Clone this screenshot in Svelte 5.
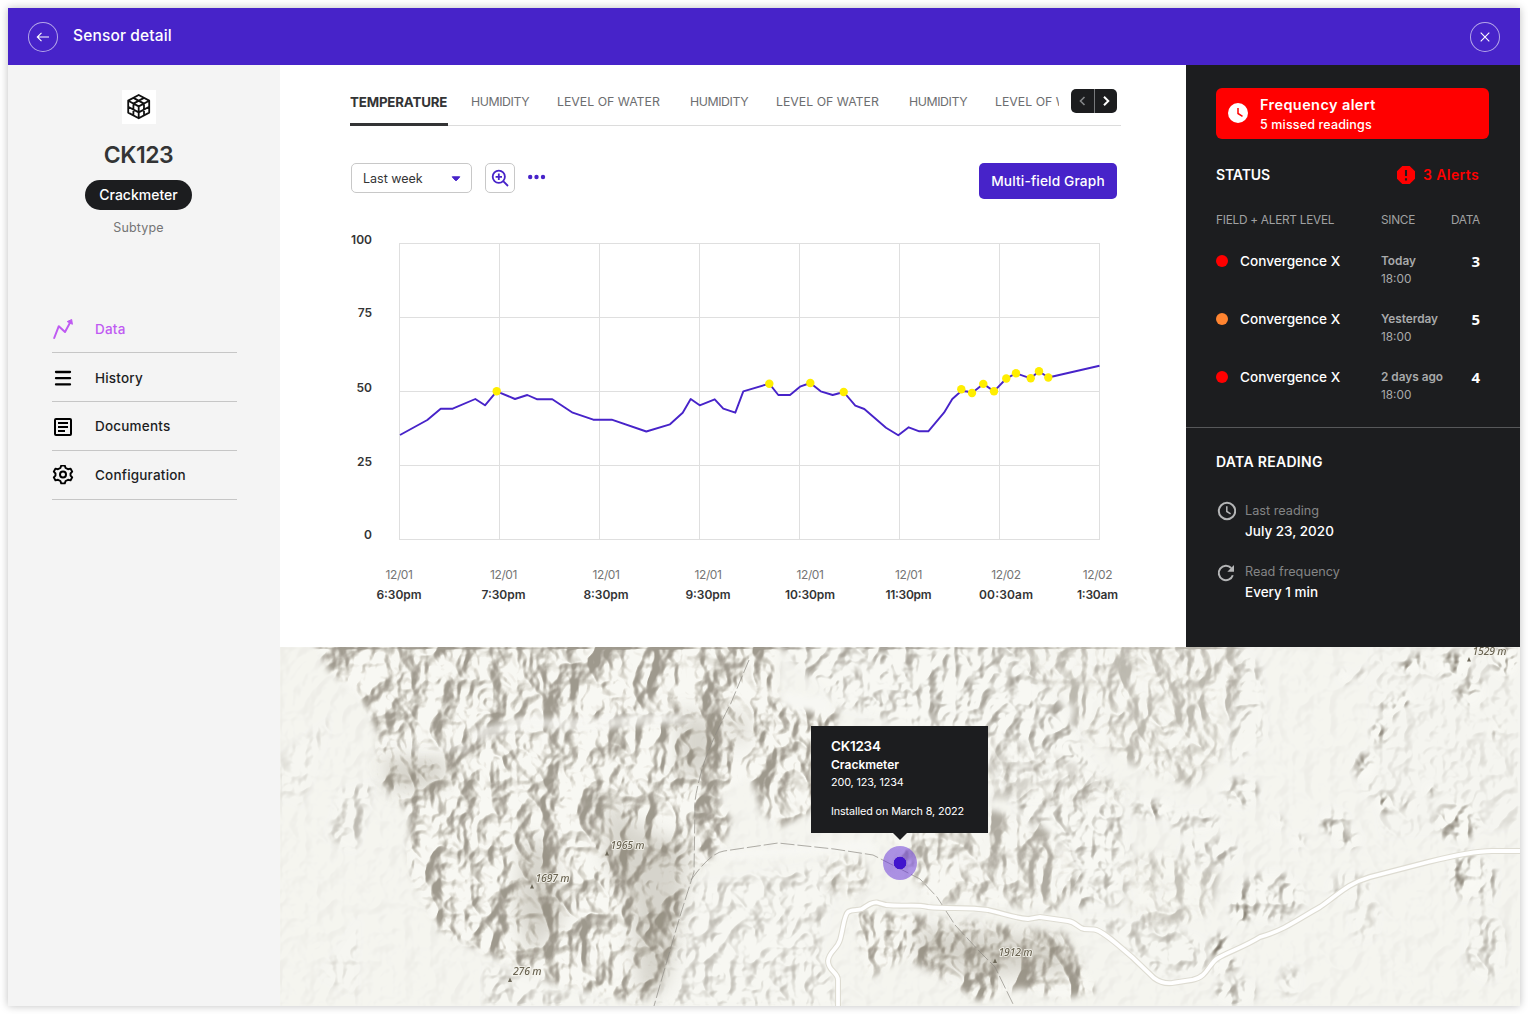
<script>
  const nav = ['Data', 'History', 'Documents', 'Configuration'];
  const tabs = ['TEMPERATURE', 'HUMIDITY', 'LEVEL OF WATER', 'HUMIDITY', 'LEVEL OF WATER', 'HUMIDITY', 'LEVEL OF WATER'];

  const gridX = [399.5, 499.5, 599.5, 699.5, 799.5, 899.5, 999.5, 1099.5];
  const gridY = [243.5, 317.5, 391.5, 465.5, 539.5];
  const yLabels = [
    { v: '100', y: 244 },
    { v: '75', y: 317 },
    { v: '50', y: 392 },
    { v: '25', y: 466 },
    { v: '0', y: 539 }
  ];
  const xLabels = [
    { x: 399, d: '12/01', t: '6:30pm', w: 45 },
    { x: 503.5, d: '12/01', t: '7:30pm', w: 44 },
    { x: 606, d: '12/01', t: '8:30pm', w: 45 },
    { x: 708, d: '12/01', t: '9:30pm', w: 45 },
    { x: 810, d: '12/01', t: '10:30pm', w: 50 },
    { x: 908.5, d: '12/01', t: '11:30pm', w: 46 },
    { x: 1006, d: '12/02', t: '00:30am', w: 54 },
    { x: 1097.5, d: '12/02', t: '1:30am', w: 41 }
  ];
  const series = [
    [400, 435], [427.3, 420], [440.7, 408.7], [452.7, 408.7], [475.3, 399], [485, 405.3], [496.7, 391.3],
    [515, 399], [527.3, 395], [537.3, 399.3], [552.3, 399.3], [572.7, 412.7], [593.3, 419.7], [611.7, 419.7],
    [646.3, 431.5], [670, 424.3], [682.7, 412.7], [690.7, 399], [699.7, 405.3], [714.7, 399.3], [723.3, 408.7],
    [735.3, 412.7], [743.3, 391.3], [769.3, 383.7], [778.3, 395], [790, 395], [800, 386.7], [810.3, 383],
    [820.7, 391.3], [832.7, 395], [843.7, 392], [855.3, 405.7], [864.3, 409], [886, 427.7], [898.3, 435.3],
    [908.7, 427.3], [919.3, 431.3], [928.3, 431.3], [944, 412.7], [952.3, 399], [961.3, 391], [967, 391.5], [972, 393],
    [983.3, 383.9], [994, 391.3], [1006.3, 378.5], [1016, 373.3], [1030.7, 378.3], [1039, 371.3], [1048.3, 377.5],
    [1099.5, 365.8]
  ];
  const warnings = [
    [496.7, 391.3], [769.3, 383.7], [810.3, 383], [843.7, 392], [961.3, 389.3], [972, 393], [983.3, 383.9],
    [994, 391.3], [1006.3, 378.5], [1016, 373.3], [1030.7, 378.3], [1039, 371.3], [1048.3, 377.5]
  ];
  const linePoints = series.map((p) => p.join(',')).join(' ');

  const alerts = [
    { level: 'red', day: 'Today', n: 3 },
    { level: 'orange', day: 'Yesterday', n: 5 },
    { level: 'red', day: '2 days ago', n: 4 }
  ];

  // Isolated hills on the eastern plain: x, y, rx, ry, opacity
  const hills = [
    [1127, 20, 6, 7, 1], [1139, 16, 7, 9, 1], [1124, 53, 6, 6, 1], [1110, 60, 8, 9, 0.8], [1065, 30, 5, 5, 0.9], [1082, 28, 4, 5, 0.7],
    [1100, 85, 8, 14, 0.7], [1085, 120, 9, 14, 0.9], [1105, 155, 8, 10, 1], [1090, 143, 5, 6, 0.7], [1173, 18, 16, 12, 1],
    [1225, 15, 12, 14, 1], [1190, 45, 14, 16, 0.6], [1217, 85, 4, 6, 0.9], [1151, 143, 5, 5, 0.8], [1125, 158, 5, 5, 0.7],
    [1178, 175, 20, 20, 0.8], [1185, 228, 14, 24, 0.8], [1205, 235, 12, 22, 0.6], [1205, 300, 20, 34, 0.4], [1054, 175, 14, 12, 0.7],
    [1068, 192, 12, 8, 0.7], [1018, 193, 5, 6, 0.8], [998, 175, 6, 5, 0.7], [962, 262, 10, 14, 1], [990, 250, 34, 24, 0.55],
    [940, 300, 10, 12, 0.9], [945, 318, 14, 8, 0.8], [955, 345, 20, 14, 0.5], [1010, 335, 10, 16, 0.35], [1070, 240, 22, 12, 0.35],
    [872, 162, 20, 8, 0.9], [915, 175, 26, 12, 0.5], [930, 205, 30, 14, 0.5], [960, 145, 18, 14, 0.6], [1085, 270, 14, 24, 0.25]
  ];
  const peaks = [
    { x: 330.5, y: 201.5, t: '1965 m', px: 327 },
    { x: 255.5, y: 234.5, t: '1697 m', px: 252 },
    { x: 233, y: 328, t: '276 m', px: 230 },
    { x: 718.5, y: 309, t: '1912 m', px: 715 },
    { x: 1192.5, y: 7.5, t: '1529 m', px: 1189 }
  ];
  const road =
    'M558 360V333C558 325 548 324 548 314C549 304 557 303 560 293C563 283 564 268 568 265C572 262 577 264 582 262C588 258 592 255 597 255.500L606 258C625 260 634 257 648 260C668 262 688 260 708 263C722 266 734 271 748 272L760 270L788 274C796 275 798 281 804 282L814 282.500C822 283 838 298 852 310L874 331Q882 337 892 336L912 333C928 330 928 317 938 311C950 304 964 300 980 290C1005 283 1020 271 1040 260C1058 248 1066 237 1090 230L1148 215Q1192 204 1212 204H1240';
</script>

<div class="window">
  <header>
    <button class="round" aria-label="Back">
      <svg width="30" height="30" viewBox="0 0 30 30"><path d="M21 15H9.500M13.500 10.800L9.300 15L13.500 19.200" /></svg>
    </button>
    <h1>Sensor detail</h1>
    <button class="round" aria-label="Close">
      <svg width="30" height="30" viewBox="0 0 30 30"><path d="M10.700 10.700L19.300 19.300M19.300 10.700L10.700 19.300" /></svg>
    </button>
  </header>

  <div class="body">
    <aside class="side">
      <div class="identity">
        <div class="cube">
          <svg width="34" height="34" viewBox="0 0 34 34">
            <path class="edge" d="M16.700 5L27.200 10.600V22.600L16.700 28.300L6.200 22.600V10.600ZM6.200 10.800L16.700 16.400L27.200 10.800M16.700 16.400V28.300M11.400 7.900L22 13.600V25.400M22 7.900L11.400 13.600V25.400M6.200 16.700L16.700 22.400L27.200 16.700" />
          </svg>
        </div>
        <h2>CK123</h2>
        <span class="pill">Crackmeter</span>
        <span class="subtype">Subtype</span>
      </div>
      <nav>
        {#each nav as item, i}
          <a class:active={i === 0} class:raised={i > 1}>
            <svg width="22" height="22" viewBox="0 0 22 22">
              {#if i === 0}
                <path d="M2.200 20L6.800 8.200L13 14L18.400 4" fill="none" stroke="#bf5af2" stroke-width="2" stroke-linecap="round" stroke-linejoin="round" />
                <path d="M15.200 3.600L19.700 1.500L20.400 6.300Z" fill="#bf5af2" stroke="#bf5af2" stroke-linejoin="round" />
              {:else if i === 1}
                <path d="M4 5H18M4 11.200H18M4 17.400H18" stroke="#000" stroke-width="2.300" stroke-linecap="round" />
              {:else if i === 2}
                <rect x="3" y="3" width="16" height="16" rx="1" fill="none" stroke="#000" stroke-width="2" />
                <path d="M6 7H16M6 11H16M6 15H13" stroke="#000" stroke-width="2" />
              {:else}
                <g transform="translate(0 -1.500)">
                  <path d="M9.200 2.100H12.800L13.600 4.500L16 5.700L18.600 5.100L20.200 8.200L18.500 10V12L20.200 13.800L18.600 16.900L16 16.300L13.600 17.500L12.800 19.900H9.200L8.400 17.500L6 16.300L3.400 16.900L1.800 13.800L3.500 12V10L1.800 8.200L3.400 5.100L6 5.700L8.400 4.500Z" fill="none" stroke="#000" stroke-width="1.900" stroke-linejoin="round" />
                  <circle cx="11" cy="11" r="3" fill="none" stroke="#000" stroke-width="2" />
                </g>
              {/if}
            </svg>
            <span>{item}</span>
          </a>
        {/each}
      </nav>
    </aside>

    <main>
      <div class="top">
        <section class="graph">
          <div class="tabbar">
            <div class="tabs">
              {#each tabs as tab, i}
                <span class="tab" class:current={i === 0} class:short={tab === 'HUMIDITY'}>{tab}</span>
              {/each}
            </div>
            <div class="pager">
              <svg width="46" height="24" viewBox="0 0 46 24">
                <path d="M13.500 8L9.500 12L13.500 16" stroke="#86888a" />
                <path class="next" d="M33 7.700L37.300 12L33 16.300" stroke="#fff" />
                <path class="split" d="M23.500 0V24" stroke="#77797b" />
              </svg>
            </div>
          </div>

          <div class="tools">
            <div class="select">
              <span>Last week</span>
              <svg width="10" height="6" viewBox="0 0 10 6"><path d="M1.200 .8H8.800L5.600 4.400Q5 5 4.400 4.400Z" fill="#4723c9" stroke="#4723c9" stroke-linejoin="round" /></svg>
            </div>
            <button class="zoom" aria-label="Zoom">
              <svg width="18" height="18" viewBox="0 0 18 18" fill="none" stroke="#4723c9" stroke-width="1.800">
                <circle cx="7.800" cy="7.800" r="6.100" />
                <path d="M12.200 12.200L17 17M7.800 4.600V11M4.600 7.800H11" />
              </svg>
            </button>
            <svg class="dots" width="18" height="6" viewBox="0 0 18 6" fill="#4723c9">
              <circle cx="2.200" cy="3" r="2.200" /><circle cx="8.500" cy="3" r="2.200" /><circle cx="15" cy="3" r="2.200" />
            </svg>
            <button class="multi">Multi-field Graph</button>
          </div>

          <svg class="chart" width="771" height="390" viewBox="350 225 771 390">
            <g stroke="#dfdfdf">
              {#each gridX as x}<path d="M{x} 243V540" />{/each}
              {#each gridY as y}<path d="M399 {y}H1100" />{/each}
            </g>
            {#each yLabels as l}<text class="strong" x="372" y={l.y} text-anchor="end">{l.v}</text>{/each}
            {#each xLabels as l}
              <text class="date" x={l.x} y="579" text-anchor="middle">{l.d}</text>
              <text class="strong" x={l.x} y="599" text-anchor="middle" textLength={l.w}>{l.t}</text>
            {/each}
            <polyline points={linePoints} fill="none" stroke="#4723c9" stroke-width="1.900" stroke-linejoin="round" />
            {#each warnings as w}<circle cx={w[0]} cy={w[1]} r="4.200" fill="#ffee00" />{/each}
          </svg>
        </section>

        <aside class="status">
          <div class="panel">
            <div class="alert">
              <svg width="20" height="20" viewBox="0 0 20 20"><circle cx="10" cy="10" r="10" fill="#fff" /><path d="M10 5V10.500L14.500 13.300" fill="none" stroke="#f00" stroke-width="1.500" /></svg>
              <div>
                <strong>Frequency alert</strong>
                <span>5 missed readings</span>
              </div>
            </div>
            <div class="heading">
              <h3>STATUS</h3>
              <svg width="18" height="18" viewBox="0 0 18 18"><path d="M5.300 0H12.700L18 5.300V12.700L12.700 18H5.300L0 12.700V5.300Z" fill="#f00" /><path d="M9 4V10M9 12.300V14.500" stroke="#1c1d1f" stroke-width="2.100" /></svg>
              <b>3 Alerts</b>
            </div>
            <div class="row cols"><span class="c1">FIELD + ALERT LEVEL</span><span class="c2">SINCE</span><span class="c3">DATA</span></div>
            {#each alerts as a}
              <div class="row">
                <i class={a.level}></i>
                <span class="name">Convergence X</span>
                <div class="since"><b>{a.day}</b><span>18:00</span></div>
                <strong class="count">{a.n}</strong>
              </div>
            {/each}
          </div>
          <div class="reading">
            <h3>DATA READING</h3>
            <div class="fact">
              <svg width="20" height="20" viewBox="0 0 20 20" fill="none" stroke="#b4b5b6" stroke-width="2"><circle cx="11" cy="10" r="8.200" /><path d="M10.800 5.200V10.500L14.600 12.800" stroke-width="1.500" /></svg>
              <div><span>Last reading</span><b>July 23, 2020</b></div>
            </div>
            <div class="fact">
              <svg width="20" height="20" viewBox="0 0 20 20"><path d="M15.200 6A7.200 7.200 0 1 0 16.800 13.200" fill="none" stroke="#b4b5b6" stroke-width="2" /><path d="M18 3V9.700H11.300Z" fill="#b4b5b6" /></svg>
              <div><span>Read frequency</span><b>Every 1 min</b></div>
            </div>
          </div>
        </aside>
      </div>

      <section class="map">
        <svg class="terrain" width="1240" height="359" viewBox="0 0 1240 359">
          <defs>
            <filter id="relief" x="0" y="0" width="100%" height="100%" color-interpolation-filters="sRGB">
              <feTurbulence type="turbulence" baseFrequency="0.019 0.015" numOctaves="4" seed="23" />
              <feGaussianBlur stdDeviation="0.8" result="n" />
              <feDiffuseLighting in="n" surfaceScale="-22" diffuseConstant="1.14" lighting-color="#fff">
                <feDistantLight azimuth="205" elevation="54" />
              </feDiffuseLighting>
              <feComponentTransfer>
                <feFuncR type="table" tableValues=".62 .64 .67 .71 .75 .79 .83 .87 .91 .945 .975" />
                <feFuncG type="table" tableValues=".60 .62 .65 .69 .735 .78 .82 .86 .905 .94 .975" />
                <feFuncB type="table" tableValues=".555 .575 .61 .65 .695 .74 .785 .825 .875 .915 .955" />
              </feComponentTransfer>
            </filter>
            <filter id="detail" x="0" y="0" width="100%" height="100%" color-interpolation-filters="sRGB">
              <feTurbulence type="turbulence" baseFrequency="0.04 0.035" numOctaves="3" seed="4" />
              <feGaussianBlur stdDeviation="0.8" result="n" />
              <feDiffuseLighting in="n" surfaceScale="-10" diffuseConstant="1.2" lighting-color="#fff">
                <feDistantLight azimuth="215" elevation="53" />
              </feDiffuseLighting>
              <feComponentTransfer>
                <feFuncR type="table" tableValues=".45 .5 .56 .62 .68 .74 .80 .86 .92 .965 .98" />
                <feFuncG type="table" tableValues=".42 .47 .54 .60 .66 .73 .79 .855 .92 .965 .98" />
                <feFuncB type="table" tableValues=".37 .42 .49 .56 .62 .69 .755 .825 .895 .945 .96" />
              </feComponentTransfer>
            </filter>
            <filter id="soft3"><feGaussianBlur stdDeviation="3" /></filter>
            <filter id="soft9" x="-50%" y="-50%" width="200%" height="200%"><feGaussianBlur stdDeviation="9" /></filter>
            <mask id="ranges" maskUnits="userSpaceOnUse" x="0" y="0" width="1240" height="359">
              <g fill="#fff" filter="url(#soft3)">
                <path d="M32 -10L48 22L82 53L98 85L97 130L130 168L128 205L135 240L160 285L225 315L277 338L360 356L378 340L400 290L402 255L412 225L440 205L452 175L438 150L470 128L482 165L500 180L530 165L548 105L560 62L500 55L495 30L500 -10Z" />
                <path d="M720 -10L952 -10L960 35L945 85L940 110L912 140L860 122L820 98L790 78L795 60L778 50L752 30Z" opacity=".65" />
                <path d="M610 192L700 160L760 178L790 205L800 240L775 264L700 256L650 256Z" opacity=".8" />
                <path d="M575 262L605 266L700 276L785 287L800 315L816 345L780 352L740 340L700 355L660 330L625 310L590 330L580 300Z" />
                <path d="M838 215L880 205L915 215L940 225L930 265L890 285L865 280L850 260Z" opacity=".55" />
                <path d="M545 205L580 208L592 235L575 250L548 245Z" opacity=".7" />
                <path d="M700 85L740 95L850 140L850 155L790 160L700 150Z" opacity=".4" />
              </g>
            </mask>
            <mask id="foothills" maskUnits="userSpaceOnUse" x="0" y="0" width="1240" height="359">
              <rect width="1240" height="359" fill="#fff" opacity=".05" />
              <g fill="#fff" filter="url(#soft3)">
                <path d="M490 -10H730L790 70L800 100L840 150L850 210L840 260L790 260L700 90L620 75L560 60Z" opacity=".55" />
                <path d="M400 240L560 215L540 300L560 360L380 360Z" opacity=".35" />
                <path d="M48 190L60 145L92 135L80 190L72 205Z" opacity=".4" />
                <path d="M0 110L50 70L45 100L20 160L0 150Z" opacity=".15" />
                <path d="M40 330L80 270L75 350Z" opacity=".18" />
                <path d="M205 318L260 335L330 360H205Z" opacity=".35" />
                <path d="M1090 0H1240V180L1100 190L1090 100Z" opacity=".12" />
                <path d="M950 -10L980 20L985 90L950 120Z" opacity=".4" />
                <path d="M800 270L870 275L920 290L930 320L880 330L830 285Z" opacity=".4" />
                {#each hills as h}
                  <ellipse cx={h[0]} cy={h[1]} rx={h[2]} ry={h[3]} opacity={h[4]} />
                {/each}
              </g>
            </mask>
          </defs>
          <rect width="1240" height="359" fill="#f5f5f0" />
          <g mask="url(#foothills)"><rect width="1240" height="359" filter="url(#detail)" /></g>
          <g mask="url(#ranges)"><rect width="1240" height="359" filter="url(#relief)" /></g>
          <g fill="#8b8474" filter="url(#soft9)" opacity=".3">
            <path d="M325 150L360 180L410 200L400 270L385 340L360 350L350 250L325 210Z" />
            <path d="M100 110L170 110L160 140L110 145Z" />
            <path d="M245 190L270 200L285 270L250 310L235 260Z" />
            <path d="M400 60L440 80L430 130L400 130Z" />
            <path d="M445 60L470 75L460 105Z" />
            <path d="M635 280L780 290L795 325L700 330L640 310Z" />
          </g>
          <g fill="#f7f7f3" filter="url(#soft3)">
            <path d="M500 45L550 50L550 68L505 60Z" />
            <path d="M430 205L590 192L600 205L445 213Z" />
            <path d="M190 84L240 70L300 72L370 66L410 68L408 76L370 78L310 84L250 80L195 94Z" opacity=".7" />
            <path d="M95 93L140 100L190 98L190 104L140 106Z" opacity=".6" />
          </g>
          <g fill="none" stroke="#8e8b84" stroke-width=".7" stroke-dasharray="14 3">
            <path d="M469 13L451 56Q428 100 421 126T415 160L414 225L401 266L391 300L374 359" />
            <path d="M411 233Q430 206 444 204L498 196L554 202L593 208L640 232L657 250L675 278L700 305L715 320L734 359" />
          </g>
          <path d={road} fill="none" stroke="#dedcd2" stroke-width="6" />
          <path d={road} fill="none" stroke="#fff" stroke-width="3.800" />
          {#each peaks as p}
            <path d="M{p.px - 2} {p.y + 7}l2 -4.500l2 4.500z" fill="#6d6859" />
            <text class="peak" x={p.x} y={p.y}>{p.t}</text>
          {/each}
        </svg>
        <div class="pin"></div>
        <div class="tip">
          <strong>CK1234</strong>
          <b>Crackmeter</b>
          <span>200, 123, 1234</span>
          <span class="installed">Installed on March 8, 2022</span>
        </div>
      </section>
    </main>
  </div>
</div>

<style>
  :global(body) { background: #fff; }
  .window, .window * { box-sizing: border-box; }
  .window {
    width: 1512px; height: 998px; margin: 8px; background: #fff;
    box-shadow: 0 0 8px rgba(0, 0, 0, 0.25);
    font-family: Inter, "Liberation Sans", sans-serif; color: #1c1d1f; white-space: nowrap;
  }
  :global(#app) { display: flow-root; }
  svg { display: block; flex: none; }
  h1, h2, h3 { margin: 0; }
  button { font: inherit; padding: 0; border: 0; background: none; }

  header { height: 57px; background: #4723c9; display: flex; align-items: center; padding: 1px 20px 0; }
  header h1 { flex: 1; margin: -3px 0 0 15px; color: #fff; font-size: 15.5px; font-weight: 500; letter-spacing: 0.15px; line-height: 20px; }
  .round { width: 30px; height: 30px; border-radius: 50%; box-shadow: inset 0 0 0 1px rgba(255, 255, 255, 0.6); }
  .round path { fill: none; stroke: #fff; stroke-width: 1.1; }

  .body { display: flex; height: 941px; }
  .side { width: 272px; background: #f4f4f4; padding-top: 25px; }
  .identity { display: flex; flex-direction: column; align-items: center; padding-right: 11px; height: 214px; }
  .cube { background: #fff; }
  .edge { fill: none; stroke: #111; stroke-width: 1.8; stroke-linejoin: round; }
  h2 { margin-top: 16px; font-size: 23px; line-height: 30px; font-weight: 600; letter-spacing: -0.5px; color: #333435; }
  .pill { margin-top: 10px; width: 107px; height: 30px; border-radius: 15px; background: #1c1d1f; color: #fff; font-size: 14px; font-weight: 500; line-height: 30px; text-align: center; }
  .subtype { margin-top: 8px; font-size: 12.5px; letter-spacing: 0.15px; line-height: 20px; color: #757575; }
  nav { margin-left: 44px; width: 185px; }
  nav a { display: flex; align-items: center; height: 49px; border-bottom: 1px solid #c6c6c6; font-size: 13.5px; font-weight: 500; letter-spacing: 0.2px; gap: 21px; padding-top: 1px; }
  nav .raised span { margin-top: -2px; }
  nav .active { color: #bf5af2; }

  main { width: 1240px; }
  .top { display: flex; height: 582px; }
  .graph { width: 906px; padding: 0 65px 0 70px; }
  .tabbar { display: flex; height: 61px; border-bottom: 1px solid #dcdcdc; position: relative; }
  .tabs { display: flex; width: 709px; height: 61px; overflow: hidden; }
  .tab { flex: none; width: 106px; height: 61px; line-height: 20px; padding-top: 27px; font-size: 12.3px; color: #6d6e70; margin-right: 27px; }
  .tab.short { width: 59px; letter-spacing: -0.4px; }
  .tab.current { font-size: 13.3px; font-weight: 700; letter-spacing: -0.15px; color: #333435; border-bottom: 3px solid #333435; width: 98px; margin-right: 23px; }
  .pager { margin: 24px 0 0 12px; width: 46px; height: 24px; border-radius: 5px; background: #1c1d1f; }
  .pager path { fill: none; stroke-width: 1.6; }
  .pager .next { stroke-width: 2; }
  .pager .split { stroke-width: 1; }

  .tools { display: flex; align-items: flex-start; height: 99px; padding: 37px 4px 0 1px; }
  .select { width: 121px; height: 30px; border: 1px solid #c8c8c8; border-radius: 5px; display: flex; align-items: center; justify-content: space-between; padding: 0 10px 0 11px; font-size: 12.5px; color: #333435; }
  .select svg { margin-top: 1px; }
  .zoom { width: 30px; height: 30px; margin-left: 13px; border: 1px solid #c8c8c8; border-radius: 5px; padding: 5px; }
  .dots { margin: 11px 0 0 13px; }
  .multi { margin-left: auto; width: 138px; height: 36px; border-radius: 5px; background: #4723c9; color: #fff; font-size: 13.7px; font-weight: 500; letter-spacing: 0.15px; }
  .strong { font-size: 12px; font-weight: 600; fill: #333435; }
  .date { font-size: 12px; letter-spacing: -0.4px; fill: #757575; }

  .status { width: 334px; background: #1c1d1f; color: #fff; }
  .panel { height: 363px; padding: 23px 0 0 30px; border-bottom: 1px solid #57585a; }
  .alert { width: 273px; height: 51px; background: #f00; border-radius: 6px; display: flex; align-items: center; gap: 12px; padding: 0 0 1px 12px; }
  .alert div { display: flex; flex-direction: column; line-height: 19px; padding-top: 2px; }
  .alert strong { font-size: 14.5px; font-weight: 600; line-height: 20px; letter-spacing: 0.4px; }
  .alert span { font-size: 12.5px; font-weight: 500; letter-spacing: 0.15px; }
  h3 { font-size: 14px; font-weight: 600; line-height: 20px; }
  .heading { display: flex; align-items: center; width: 263px; margin-top: 26px; height: 20px; }
  .heading h3 { flex: 1; letter-spacing: -0.15px; }
  .heading svg { margin-top: -1px; }
  .heading b { margin: -1px 0 0 8px; color: #f00; font-size: 14px; font-weight: 600; letter-spacing: 0.4px; width: 56px; }
  .row { display: flex; width: 264px; height: 58px; }
  .row.cols { height: 41px; margin-top: 25px; line-height: 20px; font-size: 11.8px; letter-spacing: -0.25px; color: #a0a1a2; }
  .c1 { width: 165px; }
  .c2 { flex: 1; }
  .row i { width: 12px; height: 12px; border-radius: 50%; margin-top: 3.5px; }
  .red { background: #f00; }
  .orange { background: #ff8430; }
  .name { width: 141px; margin-left: 12px; line-height: 20px; font-size: 13.6px; font-weight: 500; }
  .since { display: flex; flex-direction: column; flex: 1; font-size: 11.8px; line-height: 18px; color: #a9aaab; padding-top: 1px; }
  .since b { font-weight: 600; }
  .count { font-family: "Noto Sans", "Open Sans", sans-serif; font-size: 15px; line-height: 20px; }
  .reading { padding: 24px 0 0 30px; }
  .reading h3 { margin-bottom: 28px; letter-spacing: 0.3px; }
  .fact { display: flex; gap: 9px; height: 61px; }
  .fact svg { margin-top: 1px; }
  .fact div { display: flex; flex-direction: column; line-height: 21px; }
  .fact span { font-size: 12.7px; color: #848586; }
  .fact b { font-size: 13.5px; font-weight: 500; }

  .map { position: relative; height: 359px; overflow: hidden; }
  .peak { font: italic 500 10.5px "Noto Sans", sans-serif; letter-spacing: -0.2px; fill: #6b6553; stroke: #f4f3ec; stroke-width: 1.6px; paint-order: stroke; }
  .pin { position: absolute; left: 603px; top: 199px; width: 34px; height: 34px; border-radius: 50%; background: radial-gradient(circle, #4114cd 0 6px, rgba(97, 45, 214, 0.5) 6.6px); }
  .tip { position: absolute; left: 531px; top: 79px; width: 177px; height: 107px; padding: 11px 20px; background: #1c1d1f; color: #fff; display: flex; flex-direction: column; font-size: 10.8px; line-height: 18px; }
  .tip::after { content: ""; position: absolute; left: 82px; top: 107px; border: 7px solid transparent; border-top-color: #1c1d1f; border-bottom: 0; }
  .tip strong { font-size: 13.5px; font-weight: 600; letter-spacing: -0.25px; }
  .tip b { font-size: 12px; font-weight: 600; padding-top: 1px; line-height: 18px; }
  .tip span { letter-spacing: -0.12px; }
  .tip .installed { margin-top: 11px; }
</style>
